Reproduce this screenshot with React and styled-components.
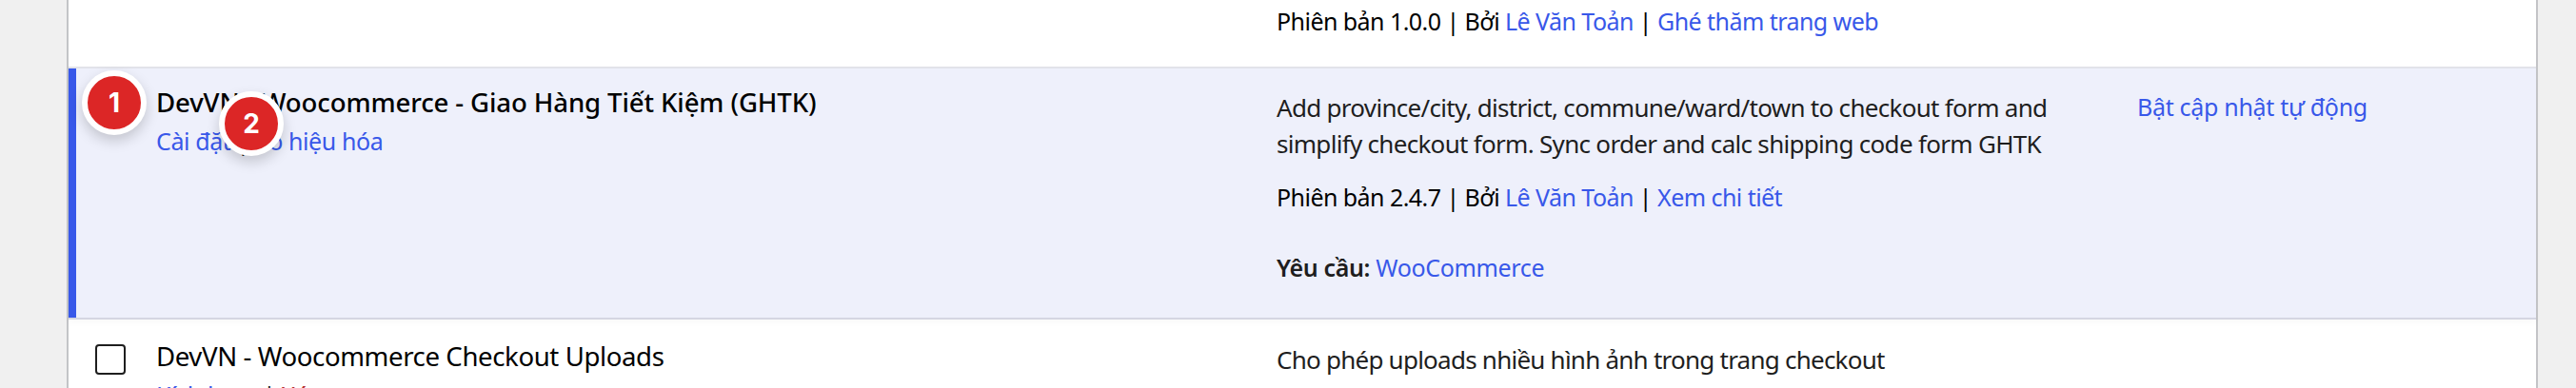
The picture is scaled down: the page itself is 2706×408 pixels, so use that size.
import React from 'react';
import styled, { createGlobalStyle } from 'styled-components';

const GlobalStyle = createGlobalStyle`
  html, body {
    margin: 0;
    padding: 0;
    height: 408px;
    overflow: hidden;
    background: #f0f0f0;
  }
  body {
    font-family: 'Noto Sans', 'Open Sans', sans-serif;
    font-size: 26px;
    line-height: 38px;
    color: #1e1e1e;
  }
`;

const Page = styled.div`
  height: 408px;
  overflow: hidden;
  padding: 0 40px 0 70px;
`;

const Table = styled.div`
  background: #fff;
  border-left: 2px solid #c3c4c7;
  border-right: 2px solid #c3c4c7;
  height: 408px;
`;

const Row = styled.div`
  position: relative;
  display: grid;
  grid-template-columns: 92px 1177px 904px 1fr;
  box-sizing: border-box;
  align-items: start;
`;

const TopRow = styled(Row)`
  height: 70px;
  align-items: end;
  padding-bottom: 29px;
`;

const ActiveRow = styled(Row)`
  height: 266px;
  background: #eef0fb;
  border-top: 2px solid #e2e3ea;
  border-bottom: 2px solid #d5d6e2;
  box-shadow: inset 8px 0 0 #3858e9, 0 4px 6px rgba(0, 0, 0, 0.025);
  padding-top: 16px;
`;

const PlainRow = styled(Row)`
  padding-top: 19px;
`;

const CheckCell = styled.div`
  padding: 7px 0 0 28px;
`;

const CheckBox = styled.span`
  display: block;
  width: 32px;
  height: 32px;
  box-sizing: border-box;
  background: #fff;
  border: 2px solid #1e1e1e;
  border-radius: 4px;
`;

const PluginCell = styled.div``;

const Title = styled.div`
  font-size: 27.6px;
  font-weight: ${(p) => (p.$strong ? 500 : 400)};
  color: #000;
  letter-spacing: ${(p) => (p.$strong ? '-0.13px' : '-0.4px')};
`;

const Actions = styled.div`
  margin-top: 3px;
  font-size: 25px;
  letter-spacing: -0.4px;
`;

const DescCell = styled.div`
  padding-top: ${(p) => (p.$short ? '4px' : '6px')};
  letter-spacing: ${(p) => (p.$short ? '-0.76px' : '-0.7px')};
`;

const Version = styled.div`
  margin-top: ${(p) => (p.$flush ? 0 : '18px')};
  font-size: 25px;
  letter-spacing: -0.55px;
  color: #000;
`;

const Requires = styled.div`
  margin-top: 36px;
  font-size: 25px;
  letter-spacing: -0.35px;
  & > b {
    font-weight: 600;
  }
`;

const AutoCell = styled.div`
  padding-top: 5px;
  font-size: 25px;
  letter-spacing: -0.3px;
`;

const Link = styled.a`
  color: ${(p) => (p.$danger ? '#b32d2e' : '#3858e9')};
  text-decoration: none;
`;

const Badge = styled.span`
  position: absolute;
  left: ${(p) => p.$x}px;
  top: ${(p) => p.$y}px;
  width: 56px;
  height: 56px;
  box-sizing: content-box;
  display: flex;
  align-items: center;
  justify-content: center;
  background: #dc2626;
  border: 6px solid #fff;
  border-radius: 50%;
  box-shadow: 0 6px 14px rgba(0, 0, 0, 0.18);
  color: #fff;
  font-family: 'Inter', 'Noto Sans', sans-serif;
  font-size: 28px;
  font-weight: 700;
  line-height: 1;
`;

export default function App() {
  return (
    <Page>
      <GlobalStyle />
      <Table>
        <TopRow>
          <span />
          <span />
          <Version $flush>
            Phiên bản 1.0.0 | Bởi <Link>Lê Văn Toản</Link> | <Link>Ghé thăm trang web</Link>
          </Version>
          <span />
        </TopRow>

        <ActiveRow>
          <CheckCell>
            <CheckBox />
          </CheckCell>
          <PluginCell>
            <Title $strong>DevVN - Woocommerce - Giao Hàng Tiết Kiệm (GHTK)</Title>
            <Actions>
              <Link>Cài đặt</Link> | <Link>Vô hiệu hóa</Link>
            </Actions>
          </PluginCell>
          <DescCell>
            Add province/city, district, commune/ward/town to checkout form and
            <br />
            simplify checkout form. Sync order and calc shipping code form GHTK
            <Version>
              Phiên bản 2.4.7 | Bởi <Link>Lê Văn Toản</Link> | <Link>Xem chi tiết</Link>
            </Version>
            <Requires>
              <b>Yêu cầu:</b> <Link>WooCommerce</Link>
            </Requires>
          </DescCell>
          <AutoCell>
            <Link>Bật cập nhật tự động</Link>
          </AutoCell>
          <Badge $x={14} $y={2}>1</Badge>
          <Badge $x={158} $y={24}>2</Badge>
        </ActiveRow>

        <PlainRow>
          <CheckCell>
            <CheckBox />
          </CheckCell>
          <PluginCell>
            <Title>DevVN - Woocommerce Checkout Uploads</Title>
            <Actions>
              <Link>Kích hoạt</Link> | <Link $danger>Xóa</Link>
            </Actions>
          </PluginCell>
          <DescCell $short>Cho phép uploads nhiều hình ảnh trong trang checkout</DescCell>
          <span />
        </PlainRow>
      </Table>
    </Page>
  );
}
